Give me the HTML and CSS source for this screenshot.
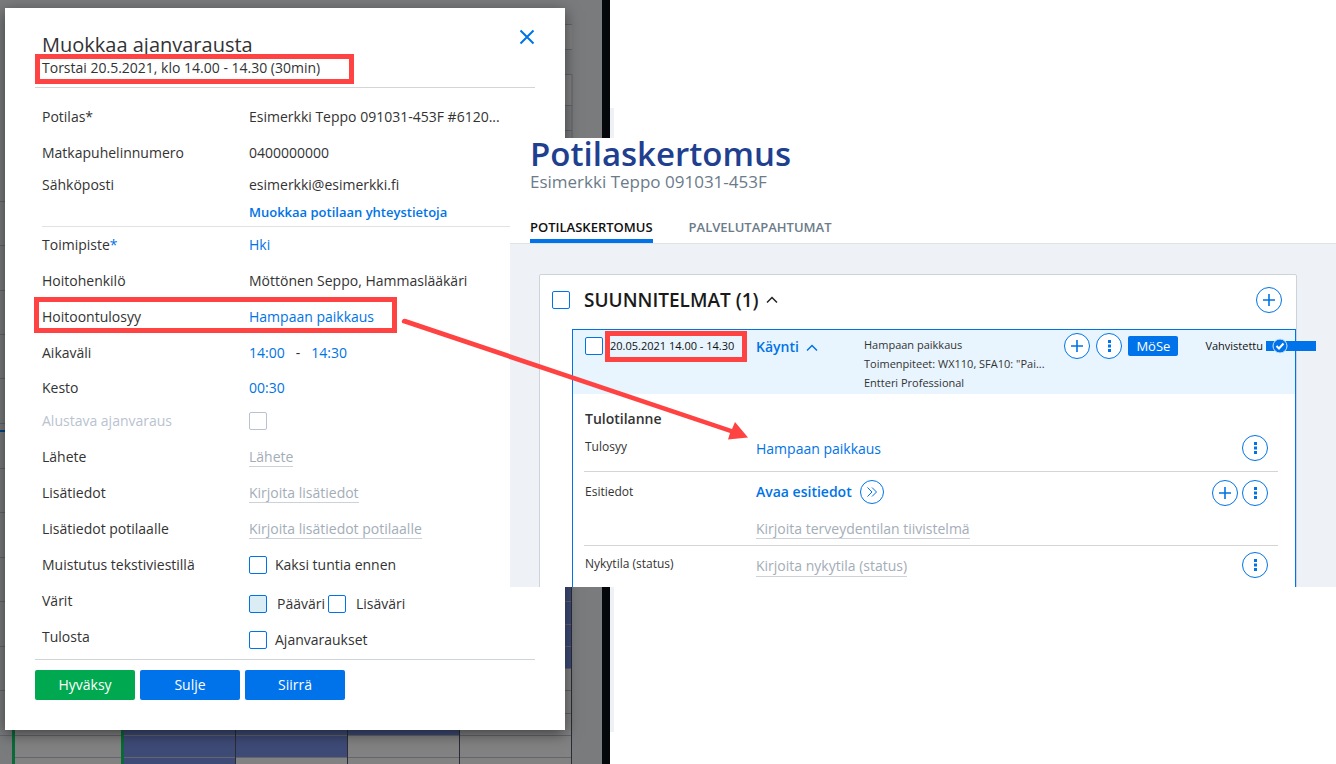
FILE: index.html
```html
<!DOCTYPE html>
<html lang="fi">
<head>
<meta charset="UTF-8" />
<meta name="viewport" content="width=device-width, initial-scale=1" />
<title>Ajanvaraus ja potilaskertomus</title>
<link rel="stylesheet" href="styles.css">
</head>
<body>
<svg class="defs" aria-hidden="true">
  <symbol id="plus" viewBox="0 0 26 26"><path d="M13 7v12M7 13h12" /></symbol>
  <symbol id="dots" viewBox="0 0 26 26"><path class="dot" d="M12 7h3v3h-3zM12 11.500h3v3h-3zM12 16h3v3h-3z" /></symbol>
  <symbol id="caret" viewBox="0 0 12 8"><path d="M1 6.500l5-5 5 5" /></symbol>
</svg>

<!-- Calendar behind the dialog -->
<div class="calendar">
  <svg width="602" height="764" aria-hidden="true">
    <path class="slot" d="M14 668h558v96H14zM565 24h7v26h-7zM565 75h7v31h-7z" />
    <path class="booked" d="M124 700h336v35H348v22H236v7H124zM565 587h7v81h-7z" />
    <path class="grid-line" d="M0 201.500h5M0 245.500h5M0 290.500h5M0 334.500h5M0 378.500h5M0 423.500h5M0 468.500h5M0 512.500h5M0 557.500h5M0 601.500h5M0 646.500h5M0 690.500h5M0 735.500h572M14 757.500h558M565 24.500h7M565 49.500h7M565 74.500h7v512M565 105.500h7M565 130.500h7M565 601.500h7M565 624.500h7M565 646.500h7M565 668.500h7M565 690.500h7M565 713.500h7" />
    <path class="column-line" d="M235.500 700v64M347.500 700v64M459.500 700v64M571.500 587v177" />
    <path class="open-line" d="M13.500 730v34M122.500 730v34" />
    <path class="now-line" d="M0 431h5" />
  </svg>
</div>
<div class="page-edge"></div>

<form class="dialog">
  <header class="dialog-header">
    <h1>Muokkaa ajanvarausta</h1>
    <p class="subtitle marked">Torstai 20.5.2021, klo 14.00 - 14.30 (30min)</p>
    <button type="button" class="close" aria-label="Sulje ikkuna">
      <svg width="16" height="16" viewBox="0 0 16 16"><path d="M1.500 1.500l13 13M14.500 1.500l-13 13" /></svg>
    </button>
  </header>
  <div class="fields">
    <div class="row"><span>Potilas*</span><span>Esimerkki Teppo 091031-453F #6120...</span></div>
    <div class="row"><span>Matkapuhelinnumero</span><span>0400000000</span></div>
    <div class="row short"><span>Sähköposti</span><span>esimerkki@esimerkki.fi</span></div>
    <div class="row short ruled"><span></span><a href="#" class="strong">Muokkaa potilaan yhteystietoja</a></div>
    <div class="row"><span>Toimipiste<span class="blue">*</span></span><a href="#">Hki</a></div>
    <div class="row"><span>Hoitohenkilö</span><span>Möttönen Seppo, Hammaslääkäri</span></div>
    <div class="row marked"><span>Hoitoontulosyy</span><a href="#">Hampaan paikkaus</a></div>
    <div class="row"><span>Aikaväli</span><span class="times"><a href="#">14:00</a><span>-</span><a href="#">14:30</a></span></div>
    <div class="row compact"><span>Kesto</span><a href="#">00:30</a></div>
    <div class="row compact disabled"><label for="draft">Alustava ajanvaraus</label><input type="checkbox" id="draft" disabled></div>
    <div class="row"><label for="referral">Lähete</label><input type="text" id="referral" placeholder="Lähete"></div>
    <div class="row"><label for="notes">Lisätiedot</label><input type="text" id="notes" placeholder="Kirjoita lisätiedot"></div>
    <div class="row"><label for="patient-notes">Lisätiedot potilaalle</label><input type="text" id="patient-notes" placeholder="Kirjoita lisätiedot potilaalle"></div>
    <div class="row"><span>Muistutus tekstiviestillä</span><label class="check"><input type="checkbox">Kaksi tuntia ennen</label></div>
    <div class="row"><span>Värit</span>
      <span class="colors">
        <label class="check"><input type="checkbox" class="tinted">Pääväri</label>
        <label class="check"><input type="checkbox">Lisäväri</label>
      </span>
    </div>
    <div class="row"><span>Tulosta</span><label class="check low"><input type="checkbox">Ajanvaraukset</label></div>
  </div>
  <footer class="actions">
    <button type="submit" class="accept">Hyväksy</button>
    <button type="button">Sulje</button>
    <button type="button">Siirrä</button>
  </footer>
</form>

<main class="record">
  <header class="record-header">
    <h2>Potilaskertomus</h2>
    <p>Esimerkki Teppo 091031-453F</p>
    <nav class="tabs">
      <a href="#" class="active">POTILASKERTOMUS</a>
      <a href="#">PALVELUTAPAHTUMAT</a>
    </nav>
  </header>
  <section class="plans">
    <header class="plans-header">
      <input type="checkbox" aria-label="Valitse suunnitelmat">
      <h3>SUUNNITELMAT (1)</h3>
      <svg class="caret" width="12" height="8"><use href="#caret" /></svg>
      <button type="button" class="round" aria-label="Lisää suunnitelma"><svg><use href="#plus" /></svg></button>
    </header>
    <article class="visit">
      <header class="visit-header">
        <label class="visit-date"><input type="checkbox"><span class="marked">20.05.2021 14.00 - 14.30</span></label>
        <button type="button" class="visit-type">Käynti <svg class="caret" width="12" height="8"><use href="#caret" /></svg></button>
        <p class="summary">Hampaan paikkaus<br>Toimenpiteet: WX110, SFA10: "Pai...<br>Entteri Professional</p>
        <div class="visit-tools">
          <button type="button" class="round" aria-label="Lisää"><svg><use href="#plus" /></svg></button>
          <button type="button" class="round" aria-label="Valikko"><svg><use href="#dots" /></svg></button>
          <span class="badge">MöSe</span>
          <span class="status">Vahvistettu
            <span class="status-bar">
              <svg width="16" height="16" viewBox="0 0 16 16"><circle cx="8" cy="8" r="7" /><path d="M4.500 8l2.500 2.500L11.500 5.500" /></svg>
            </span>
          </span>
        </div>
      </header>
      <div class="details">
        <h4>Tulotilanne</h4>
        <div class="detail">
          <span>Tulosyy</span>
          <div class="value"><a href="#">Hampaan paikkaus</a></div>
          <button type="button" class="round" aria-label="Tulosyyn valikko"><svg><use href="#dots" /></svg></button>
        </div>
        <div class="detail history">
          <label for="history">Esitiedot</label>
          <div class="value">
            <a href="#" class="open-history">Avaa esitiedot
              <svg width="24" height="24" viewBox="0 0 24 24"><circle cx="12" cy="12" r="11.500" /><path d="M7.500 7.500l4.500 4.500-4.500 4.500M12 7.500l4.500 4.500-4.500 4.500" /></svg>
            </a>
            <input type="text" id="history" placeholder="Kirjoita terveydentilan tiivistelmä">
          </div>
          <button type="button" class="round" aria-label="Lisää esitieto"><svg><use href="#plus" /></svg></button>
          <button type="button" class="round" aria-label="Esitietojen valikko"><svg><use href="#dots" /></svg></button>
        </div>
        <div class="detail">
          <label for="state">Nykytila (status)</label>
          <div class="value"><input type="text" id="state" placeholder="Kirjoita nykytila (status)"></div>
          <button type="button" class="round" aria-label="Nykytilan valikko"><svg><use href="#dots" /></svg></button>
        </div>
      </div>
    </article>
  </section>
</main>

<!-- Arrow from the reason of the booking to the reason in the record -->
<svg class="arrow" width="350" height="130" viewBox="0 0 350 130" aria-hidden="true">
  <path d="M2 2.500Q3 0 6 1L332 111l3-7L348 119.500l-20 2 2-6.500L4 5.500Q1 5 2 2.500z" />
</svg>
</body>
</html>
```

FILE: styles.css
```css
* {
  box-sizing: border-box;
}
body {
  position: relative;
  min-height: 100vh;
  margin: 0;
  background: #fff;
  color: #333;
  font-family: 'Segoe UI', 'Open Sans', sans-serif;
  font-size: 14px;
  line-height: 20px;
  overflow: hidden;
}
h1, h2, h3, h4, p {
  margin: 0;
}
a, .blue {
  color: #0073e6;
  text-decoration: none;
}
button, input {
  font: inherit;
}
button {
  padding: 0;
  border: none;
  background: none;
  color: #0073e6;
  cursor: pointer;
}
svg {
  fill: none;
  stroke: #0073e6;
}
.defs {
  position: absolute;
  width: 0;
  height: 0;
}
.dot {
  fill: #0073e6;
  stroke: none;
}
input[type="checkbox"] {
  appearance: none;
  flex: none;
  width: 18px;
  height: 18px;
  margin: 0;
  border: 1px solid #0073e6;
  border-radius: 2px;
  background: #fff;
}
input[type="checkbox"].tinted {
  background: #daedf5;
}
input[type="checkbox"]:disabled {
  border-color: #b9c3cf;
}
input[type="text"] {
  field-sizing: content;
  justify-self: start;
  height: 20px;
  padding: 0;
  border: none;
  border-bottom: 1px solid #cbd2d9;
  background: none;
  outline: none;
}
input::placeholder {
  color: #a3adb8;
  opacity: 1;
}

/* Red frame round a text */
.marked {
  position: relative;
}
.marked::after {
  content: '';
  position: absolute;
  inset: -5px;
  border: 5px solid #ff4343;
}

/* Calendar */
.calendar {
  position: absolute;
  inset: 0 auto 0 0;
  width: 610px;
  background: #7a7b7d;
  border-right: 8px solid #04080b;
  overflow: hidden;
}
.page-edge {
  position: absolute;
  top: 108px;
  left: 610px;
  width: 4px;
  height: 624px;
  background: #eef1f6;
}
.slot { fill: #828282; stroke: none; }
.booked { fill: #3e4b77; stroke: none; }
.grid-line { stroke: #62656c; }
.column-line { stroke: #2a2d36; }
.open-line { stroke: #0a6b38; stroke-width: 3; }
.now-line { stroke: #004586; stroke-width: 2; }

/* Dialog */
.dialog {
  position: absolute;
  top: 8px;
  left: 5px;
  width: 560px;
  padding: 23px 30px 30px;
  background: #fff;
  box-shadow: 0 4px 14px rgba(0, 0, 0, 0.5);
}
.dialog-header {
  position: relative;
  padding: 0 7px 10px;
  border-bottom: 1px solid #d5d5d5;
}
.dialog-header h1 {
  font-size: 20px;
  font-weight: 400;
  line-height: 28px;
}
.subtitle {
  width: 309px;
  line-height: 18px;
}
.subtitle.marked::after {
  inset: -5px -3px -7px -7px;
}
.close {
  position: absolute;
  top: -2px;
  right: 0;
  line-height: 0;
}
.close svg {
  stroke-width: 2;
}
.fields {
  padding: 11px 25px 4px 7px;
}
.row {
  display: grid;
  grid-template-columns: 207px 1fr;
  align-items: center;
  height: 36px;
  white-space: nowrap;
}
.row.short {
  height: 28px;
}
.row.compact {
  height: 34px;
}
.row.ruled {
  padding-bottom: 2px;
  border-bottom: 1px solid #e2e2e2;
}
.row.disabled {
  padding-bottom: 3px;
  color: #b9c3cf;
}
.row.marked::after {
  inset: -2px 113px 2px -8px;
}
.strong {
  font-size: 13px;
  font-weight: 600;
}
.times {
  display: flex;
  gap: 11px;
}
.check {
  display: flex;
  align-items: center;
  gap: 8px;
}
.check.low {
  padding-top: 5px;
}
.colors {
  display: flex;
  gap: 3px;
  padding-top: 5px;
}
.colors .check {
  gap: 10px;
}
.actions {
  display: flex;
  gap: 5px;
  padding-top: 10px;
  border-top: 1px solid #ced4da;
}
.actions button {
  width: 100px;
  height: 30px;
  border-radius: 2px;
  background: #0073eb;
  color: #fff;
}
.actions .accept {
  background: #00a94f;
}

/* Patient record */
.record {
  position: absolute;
  top: 138px;
  right: 0;
  left: 510px;
  height: 449px;
  background: #eef1f6;
  overflow: hidden;
}
.record-header {
  padding: 0 20px;
  border-bottom: 1px solid #dde3e9;
  background: #fff;
}
.record-header h2 {
  color: #213f8f;
  font-size: 33px;
  font-weight: 600;
  line-height: 32px;
}
.record-header p {
  color: #6b7b8a;
  font-size: 17px;
  line-height: 24px;
}
.tabs {
  display: flex;
  gap: 36px;
  padding-top: 23px;
}
.tabs a {
  padding-bottom: 2px;
  border-bottom: 4px solid transparent;
  color: #6b7b8a;
  font-size: 13px;
  font-weight: 600;
}
.tabs .active {
  border-color: #0073eb;
  color: #111;
}
.plans {
  margin: 30px 39px 0 29px;
  padding-left: 32px;
  border: 1px solid #cdd3da;
  border-radius: 2px;
  background: #fff;
}
.plans-header {
  display: flex;
  align-items: center;
  height: 54px;
  margin-left: -20px;
  padding: 0 14px 4px 0;
}
.plans-header h3 {
  margin: 0 7px 0 14px;
  color: #1a1a1a;
  font-size: 19px;
  font-weight: 600;
}
.plans-header .caret {
  stroke: #222;
}
.plans-header .round {
  margin-left: auto;
}
.caret {
  stroke-width: 1.5;
}
.round {
  flex: none;
  width: 26px;
  height: 26px;
  border: 1px solid #0073e6;
  border-radius: 50%;
  background: #fff;
}
.round svg {
  display: block;
  width: 26px;
  height: 26px;
  margin: -1px;
  stroke-width: 1.6;
}
.visit {
  border: 1px solid #0073e6;
  border-bottom: none;
}
.visit-header {
  display: grid;
  grid-template-columns: 171px 108px 1fr auto;
  align-items: start;
  height: 64px;
  padding: 3px 0 0 12px;
  background: #e8f5fe;
}
.visit-date {
  display: flex;
  align-items: center;
  gap: 7px;
  padding-top: 3px;
  color: #111;
  font-size: 11px;
  line-height: 20px;
  white-space: nowrap;
}
.visit-date .marked {
  width: 132px;
}
.visit-date .marked::after {
  inset: -5px -5px -6px;
}
.visit-type {
  padding-top: 4px;
  font-size: 14px;
  font-weight: 600;
  text-align: left;
}
.visit-type .caret {
  margin-left: 3px;
}
.summary {
  padding-top: 2px;
  font-size: 11px;
  line-height: 19px;
  white-space: nowrap;
}
.visit-tools {
  display: flex;
  align-items: center;
  gap: 6px;
  margin-right: -21px;
}
.badge {
  width: 50px;
  border-radius: 2px;
  background: #0073eb;
  color: #fff;
  font-size: 13px;
  text-align: center;
}
.status {
  display: flex;
  align-items: center;
  gap: 3px;
  margin-left: 21px;
  color: #111;
  font-size: 11px;
}
.status-bar {
  display: flex;
  align-items: center;
  width: 50px;
  height: 10px;
  padding-left: 6px;
  background: #0073eb;
}
.status-bar svg {
  flex: none;
  fill: #0073eb;
  stroke: #cfe6fb;
}
.status-bar path {
  fill: none;
  stroke: #fff;
  stroke-width: 2;
}
.details {
  padding: 15px 17px 0 11px;
}
.details h4 {
  padding-left: 1px;
  font-size: 14px;
  font-weight: 600;
}
.detail {
  display: flex;
  align-items: flex-start;
  gap: 4px;
  padding: 6px 10px 10px 1px;
  border-bottom: 1px solid #d5d5d5;
}
.detail > :first-child {
  width: 167px;
  font-size: 12px;
  line-height: 24px;
}
.value {
  flex: 1;
  padding-top: 4px;
}
.history {
  padding: 8px 10px 6px 1px;
}
.history .value {
  display: flex;
  flex-direction: column;
  align-items: flex-start;
  gap: 15px;
  padding-top: 0;
}
.open-history {
  display: flex;
  align-items: center;
  gap: 8px;
  font-weight: 600;
}

.arrow {
  position: absolute;
  top: 318px;
  left: 400px;
  fill: #ff4343;
  stroke: none;
  pointer-events: none;
}
```
